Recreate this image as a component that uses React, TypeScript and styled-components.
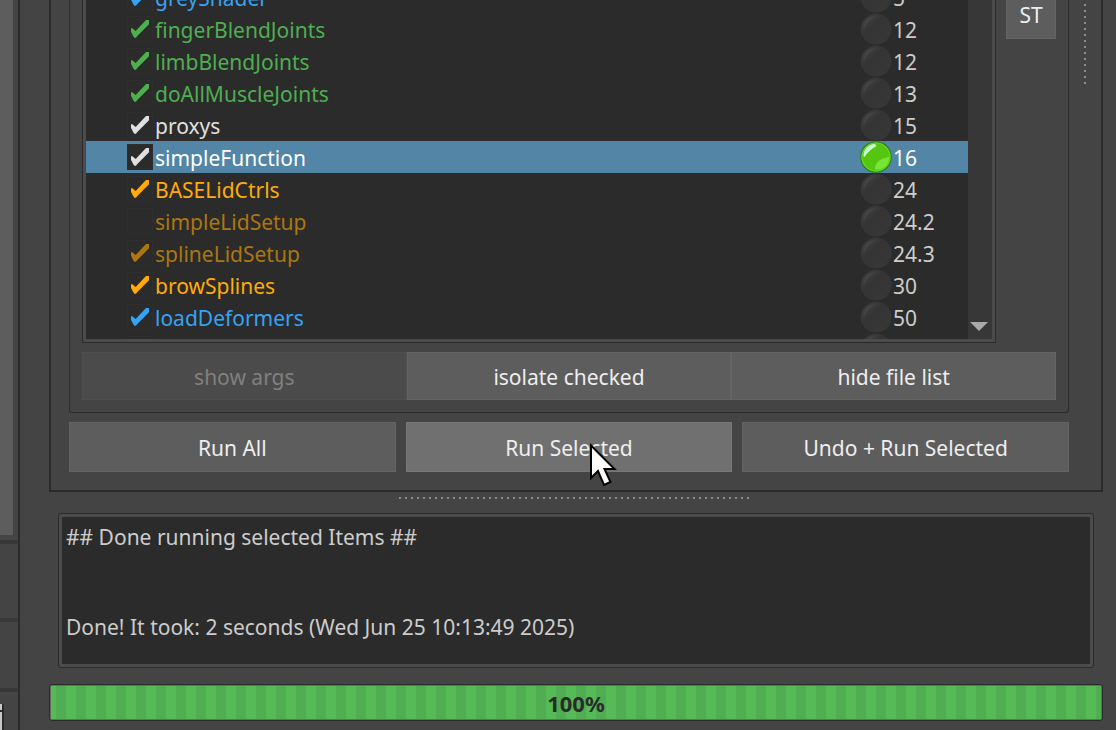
import React, { useState } from "react";
import styled, { createGlobalStyle, css } from "styled-components";

const GlobalStyle = createGlobalStyle`
  *, *::before, *::after { box-sizing: border-box; }
  body {
    margin: 0;
    background: #444444;
    color: #eeeeee;
    font: 21px/30px "Noto Sans", "Open Sans", sans-serif;
  }
  button, textarea, input { font: inherit; color: inherit; margin: 0; }
`;

const line = "#2b2b2b";
const frame = "#4b4b4b";

const Window = styled.div`
  display: flex;
  height: 100vh;
  overflow: hidden;
`;

const Rail = styled.aside`
  flex: none;
  display: flex;
  flex-direction: column;
  width: 20px;
  border-right: 2px solid ${line};
`;

const RailPane = styled.div<{ $height?: number }>`
  display: flex;
  ${(p) => (p.$height ? css`height: ${p.$height}px;` : css`flex: 1; padding: 0 5px 5px 0;`)}
  border-bottom: 4px solid #383838;
  &:last-child { border-bottom: 0; padding-top: 12px; }
`;

const RailFill = styled.div`
  flex: 1;
  background: #5d5d5d;
`;

const Main = styled.main`
  flex: 1;
  min-width: 0;
  display: flex;
  flex-direction: column;
  padding: 0 13px 9px 29px;
`;

const Builder = styled.section`
  flex: 1;
  min-height: 0;
  display: flex;
  border: 2px solid ${line};
  border-top: 0;
  padding-left: 18px;
`;

const BuilderColumn = styled.div`
  flex: 1;
  min-width: 0;
  display: flex;
  flex-direction: column;
  gap: 9px;
  padding-bottom: 18px;
`;

const FileGroup = styled.div`
  flex: 1;
  min-height: 0;
  display: flex;
  flex-direction: column;
  gap: 9px;
  padding: 0 12px 12px;
  border: 1px solid ${line};
  border-top: 0;
  border-radius: 0 0 3px 3px;
`;

const FileArea = styled.div`
  flex: 1;
  min-height: 0;
  display: flex;
  align-items: flex-start;
  gap: 10px;
`;

const ListFrame = styled.div`
  align-self: stretch;
  flex: 1;
  min-width: 0;
  display: flex;
  border: 1px solid ${line};
  border-top: 0;
  padding: 0 3px 3px;
  background: ${frame};
`;

const ListView = styled.div`
  flex: 1;
  min-width: 0;
  overflow: hidden;
  background: ${line};
`;

const List = styled.ul`
  list-style: none;
  margin: -19px 0 0;
  padding: 0;
`;

const Row = styled.li<{ $selected: boolean }>`
  display: grid;
  grid-template-columns: 1fr 32px 76px;
  align-items: center;
  height: 32px;
  padding-left: 41px;
  background: ${(p) => (p.$selected ? "#5285a6" : "transparent")};
  color: ${(p) => (p.$selected ? "#ffffff" : "#cccccc")};
`;

const ItemLabel = styled.label<{ $color: string }>`
  display: flex;
  align-items: center;
  gap: 2px;
  color: ${(p) => p.$color};
`;

const ItemName = styled.span`
  padding-top: 2px;
`;

const CheckCell = styled.span`
  display: grid;
  width: 26px;
  height: 26px;
  > * { grid-area: 1 / 1; }
`;

const CheckInput = styled.input`
  appearance: none;
  width: 26px;
  height: 26px;
  background: ${line};
  border: 1px solid #2e2e2e;
`;

const Order = styled.span`
  padding: 2px 0 0 1px;
`;

const ScrollTrack = styled.div`
  flex: none;
  display: flex;
  align-items: flex-end;
  width: 24px;
  background: #373737;
`;

const ScrollButton = styled.button`
  width: 24px;
  height: 26px;
  padding: 0 0 0 2px;
  border: 0;
  background: none;
  svg { display: block; }
`;

const Button = styled.button<{ $tone?: "hover" }>`
  position: relative;
  flex: 1 1 0;
  height: 50px;
  padding: 1px 0 0;
  border: 1px solid ${(p) => (p.$tone ? "#787878" : "#646464")};
  background: ${(p) => (p.$tone ? "#707070" : "#5d5d5d")};
  color: #eeeeee;
  &:disabled {
    border-color: #4f4f4f;
    background: #4b4b4b;
    color: #808080;
  }
`;

const ToolButton = styled(Button)`
  height: 48px;
`;

const SideButton = styled(Button)`
  flex: none;
  width: 50px;
  height: 50px;
  margin-top: -11px;
`;

const ToolRow = styled.div`
  display: flex;
`;

const RunRow = styled.div`
  display: flex;
  gap: 10px;
`;

const Pointer = styled.svg`
  position: absolute;
  left: calc(50% + 20px);
  top: 18px;
  pointer-events: none;
`;

const VerticalHandle = styled.div`
  flex: none;
  display: flex;
  justify-content: center;
  width: 32px;
  padding-top: 4px;
  &::before {
    content: "";
    width: 2px;
    height: 80px;
    background: repeating-linear-gradient(#8c8c8c 0 2px, transparent 2px 6px);
  }
`;

const HorizontalHandle = styled.div`
  flex: none;
  display: flex;
  justify-content: center;
  height: 21px;
  padding: 5px 4px 0 0;
  &::before {
    content: "";
    width: 350px;
    height: 2px;
    background: repeating-linear-gradient(90deg, #8c8c8c 0 2px, transparent 2px 6px);
  }
`;

const LogFrame = styled.div`
  flex: none;
  display: flex;
  height: 155px;
  margin: 0 9px 16px;
  padding: 3px;
  border: 1px solid ${line};
  border-radius: 3px;
  background: ${frame};
`;

const Log = styled.textarea`
  flex: 1;
  min-width: 0;
  resize: none;
  padding: 5px 4px;
  border: 0;
  outline: 0;
  background: ${line};
  color: #cccccc;
`;

const Progress = styled.div`
  flex: none;
  display: flex;
  height: 37px;
  padding: 1px;
  border: 1px solid ${line};
  border-radius: 3px;
  background: #666c66;
`;

const ProgressFill = styled.div`
  display: flex;
  align-items: center;
  justify-content: center;
  background: repeating-linear-gradient(90deg, #56bb56 0 5px, #50ad52 5px 15px, #56bb56 15px 20px);
  color: ${line};
  font-size: 22px;
  font-weight: 700;
`;

type Item = { name: string; color: string; order: string; checked: boolean };

const GREEN = "#4fae50";
const BLUE = "#36a3f2";
const ORANGE = "#ffab0a";
const DIM = "#ab7611";
const WHITE = "#e0e0e0";

const ITEMS: Item[] = [
  { name: "greyShader", color: BLUE, order: "5", checked: true },
  { name: "fingerBlendJoints", color: GREEN, order: "12", checked: true },
  { name: "limbBlendJoints", color: GREEN, order: "12", checked: true },
  { name: "doAllMuscleJoints", color: GREEN, order: "13", checked: true },
  { name: "proxys", color: WHITE, order: "15", checked: true },
  { name: "simpleFunction", color: WHITE, order: "16", checked: true },
  { name: "BASELidCtrls", color: ORANGE, order: "24", checked: true },
  { name: "simpleLidSetup", color: DIM, order: "24.2", checked: false },
  { name: "splineLidSetup", color: DIM, order: "24.3", checked: true },
  { name: "browSplines", color: ORANGE, order: "30", checked: true },
  { name: "loadDeformers", color: BLUE, order: "50", checked: true },
  { name: "", color: BLUE, order: "", checked: false },
];

const Check = ({ color }: { color: string }) => (
  <svg width="26" height="26" viewBox="0 0 78 78" pointerEvents="none" aria-hidden="true">
    <path d="M12 37H16L26 45L57 12H66V25L31 60L27 65H22L18 59L12 47Z" fill={color} />
  </svg>
);

const Lamp = ({ on }: { on: boolean }) => (
  <svg width="32" height="32" viewBox="0 0 32 32" aria-hidden="true">
    <defs>
      <linearGradient id="shineOff" x1="0" y1="0" x2="1" y2="1">
        <stop offset="0" stopColor="#464646" />
        <stop offset="0.4" stopColor="#343434" />
        <stop offset="1" stopColor="#383838" />
      </linearGradient>
      <linearGradient id="shineOn" x1="0" y1="0" x2="1" y2="1">
        <stop offset="0" stopColor="#9af59a" />
        <stop offset="0.5" stopColor="#d2fbe0" />
        <stop offset="1" stopColor="#8fe860" />
      </linearGradient>
    </defs>
    {on ? (
      <>
        <circle cx="16" cy="16" r="15.2" fill="#55c510" stroke="#2f7d1c" strokeWidth="1.2" />
        <circle cx="16" cy="16" r="14" fill="none" stroke="#5fdc1c" strokeWidth="1.2" />
        <path d="M3.5 15C3.5 8 8 3.5 15 3L16.500 5C11 8 8 11 4.500 16Z" fill="url(#shineOn)" />
        <path d="M15 28.500C15 21 20 17.500 29 16C29.500 24 23 29.500 15 28.500Z" fill="#78e438" />
      </>
    ) : (
      <>
        <circle cx="16" cy="16" r="15.6" fill="#363636" />
        <circle cx="16" cy="16" r="14.2" fill="url(#shineOff)" />
        <path d="M3.5 15C4 8 8 4 15 3C10 6 7 10 4.500 15Z" fill="#444444" />
      </>
    )}
  </svg>
);

export default function App() {
  const [items, setItems] = useState(ITEMS);
  const [selected, setSelected] = useState("simpleFunction");

  const toggle = (index: number) =>
    setItems((all) => all.map((it, i) => (i === index ? { ...it, checked: !it.checked } : it)));

  return (
    <>
      <GlobalStyle />
      <Window>
        <Rail>
          <RailPane><RailFill /></RailPane>
          <RailPane $height={78} />
          <RailPane $height={70} />
          <RailPane $height={38}>
            <svg width="4" height="26" viewBox="0 0 4 26" aria-hidden="true">
              <path d="M0 0H4V26H0Z" fill="#2b2b2b" />
              <path d="M0 0H2V6H0ZM0 8H2V26H0Z" fill="#c8c8c8" />
            </svg>
          </RailPane>
        </Rail>

        <Main>
          <Builder>
            <BuilderColumn>
              <FileGroup>
                <FileArea>
                  <ListFrame>
                    <ListView>
                      <List>
                        {items.map((item, i) => {
                          const isSelected = item.name === selected;
                          return (
                            <Row key={i} $selected={isSelected} onClick={() => setSelected(item.name)}>
                              <ItemLabel $color={isSelected ? "#ffffff" : item.color}>
                                <CheckCell>
                                  <CheckInput
                                    type="checkbox"
                                    checked={item.checked}
                                    onChange={() => toggle(i)}
                                  />
                                  {item.checked && <Check color={item.color} />}
                                </CheckCell>
                                <ItemName>{item.name}</ItemName>
                              </ItemLabel>
                              <Lamp on={isSelected} />
                              <Order>{item.order}</Order>
                            </Row>
                          );
                        })}
                      </List>
                    </ListView>
                    <ScrollTrack>
                      <ScrollButton type="button" aria-label="Scroll down">
                        <svg width="18" height="9" viewBox="0 0 18 9"><path d="M0 0H18L9 9Z" fill="#aaa8aa" /></svg>
                      </ScrollButton>
                    </ScrollTrack>
                  </ListFrame>
                  <SideButton type="button">ST</SideButton>
                </FileArea>
                <ToolRow>
                  <ToolButton type="button" disabled>show args</ToolButton>
                  <ToolButton type="button">isolate checked</ToolButton>
                  <ToolButton type="button">hide file list</ToolButton>
                </ToolRow>
              </FileGroup>
              <RunRow>
                <Button type="button">Run All</Button>
                <Button type="button" $tone="hover">
                  Run Selected
                  <Pointer width="30" height="48" viewBox="0 0 30 48" aria-hidden="true">
                    <path
                      d="M2 4.500V37L9 30L15 44L21.500 41L15.500 28H25.500Z"
                      fill="#fdfcf8"
                      stroke="#000000"
                      strokeWidth="2"
                    />
                  </Pointer>
                </Button>
                <Button type="button">Undo + Run Selected</Button>
              </RunRow>
            </BuilderColumn>
            <VerticalHandle />
          </Builder>
          <HorizontalHandle />
          <LogFrame>
            <Log
              readOnly
              aria-label="Output"
              value={"## Done running selected Items ##\n\n\nDone! It took: 2 seconds (Wed Jun 25 10:13:49 2025)"}
            />
          </LogFrame>
          <Progress role="progressbar" aria-label="Build progress" aria-valuenow={100} aria-valuemin={0} aria-valuemax={100}>
            <ProgressFill style={{ width: "100%" }}>100%</ProgressFill>
          </Progress>
        </Main>
      </Window>
    </>
  );
}
